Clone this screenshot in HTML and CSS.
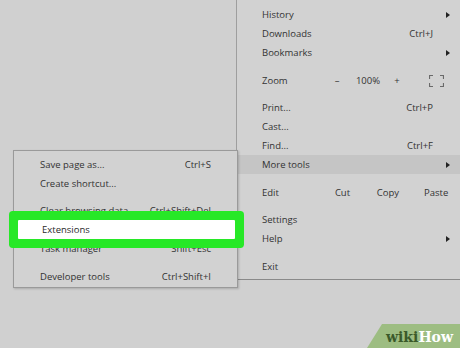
FILE: index.html
```html
<!DOCTYPE html>
<html lang="en">
<head>
    <meta charset="UTF-8">
    <meta name="viewport" content="width=device-width, initial-scale=1.0">
    <title>Chrome menu - More tools</title>
    <link rel="stylesheet" href="styles.css">
</head>
<body>
    <!-- Main browser menu -->
    <div class="menu">
        <div class="row"><span>History</span><span></span><span class="arrow"></span></div>
        <div class="row"><span>Downloads</span><span>Ctrl+J</span><span></span></div>
        <div class="row"><span>Bookmarks</span><span></span><span class="arrow"></span></div>
        <div class="sep-9"></div>
        <div class="row zoom-row">
            <span class="zoom-label">Zoom</span>
            <span class="zoom-minus">&ndash;</span>
            <span class="zoom-value">100%</span>
            <span class="zoom-plus">+</span>
            <span class="zoom-full">
                <svg width="15" height="12" viewBox="0 0 15 12">
                    <path d="M0.5 4V0.5H4M11 0.5H14.5V4M14.5 8V11.5H11M4 11.5H0.5V8" fill="none" stroke="#6a6a6a" stroke-width="1.2"/>
                </svg>
            </span>
        </div>
        <div class="sep-8"></div>
        <div class="row"><span>Print...</span><span>Ctrl+P</span><span></span></div>
        <div class="row"><span>Cast...</span><span></span><span></span></div>
        <div class="row"><span>Find...</span><span>Ctrl+F</span><span></span></div>
        <div class="row hover"><span>More tools</span><span></span><span class="arrow"></span></div>
        <div class="sep-9"></div>
        <div class="row edit-row">
            <span class="edit-label">Edit</span>
            <span class="edit-cut">Cut</span>
            <span class="edit-copy">Copy</span>
            <span class="edit-paste">Paste</span>
        </div>
        <div class="sep-8"></div>
        <div class="row"><span>Settings</span><span></span><span></span></div>
        <div class="row"><span>Help</span><span></span><span class="arrow"></span></div>
        <div class="sep-9"></div>
        <div class="row"><span>Exit</span><span></span><span></span></div>
    </div>

    <!-- More tools submenu -->
    <div class="submenu">
        <div class="sub-row"><span>Save page as...</span><span>Ctrl+S</span></div>
        <div class="sub-row"><span>Create shortcut...</span><span></span></div>
        <div class="sep-8"></div>
        <div class="sub-row"><span>Clear browsing data...</span><span>Ctrl+Shift+Del</span></div>
        <div class="sub-row picked"><span>Extensions</span><span></span></div>
        <div class="sub-row"><span>Task manager</span><span>Shift+Esc</span></div>
        <div class="sep-9"></div>
        <div class="sub-row"><span>Developer tools</span><span>Ctrl+Shift+I</span></div>
    </div>

    <div class="wikihow"><span class="wiki">wiki</span><span class="how">How</span></div>
</body>
</html>
```

FILE: styles.css
```css
* {
    margin: 0;
    padding: 0;
    box-sizing: border-box;
}
body {
    width: 460px;
    height: 348px;
    overflow: hidden;
    position: relative;
    background: #d0d0d0;
    font-family: 'Open Sans', 'Noto Sans', sans-serif;
    font-size: 9.5px;
    color: #333;
}
.menu {
    margin-left: 236px;
    background: #d2d2d2;
    border-left: 1px solid #9e9e9e;
    border-bottom: 1px solid #8a8a8a;
    padding: 5px 0 3px;
}
.row {
    display: grid;
    grid-template-columns: 1fr auto 27px;
    align-items: center;
    height: 19px;
    padding-left: 25px;
    white-space: nowrap;
}
.row.hover {
    background: #c5c5c5;
}
.arrow {
    width: 0;
    height: 0;
    margin-left: 13px;
    border-top: 3px solid transparent;
    border-bottom: 3px solid transparent;
    border-left: 4px solid #222;
}
.sep-8 {
    height: 8px;
}
.sep-9 {
    height: 9px;
}
.zoom-row {
    grid-template-columns: 65px 20px 42px 16px 1fr;
}
.zoom-minus, .zoom-value, .zoom-plus {
    text-align: center;
}
.zoom-full {
    display: flex;
    padding-left: 24px;
}
.edit-row {
    grid-template-columns: 58px 45px 46px 1fr;
}
.edit-cut, .edit-copy {
    text-align: center;
}
.edit-paste {
    padding-left: 13px;
}
.submenu {
    position: absolute;
    left: 13px;
    top: 150px;
    width: 225px;
    background: #d2d2d2;
    border: 1px solid #9a9a9a;
    box-shadow: 1px 1px 2px rgba(0, 0, 0, 0.18);
    padding: 4px 0 1px;
}
.sub-row {
    display: grid;
    grid-template-columns: 1fr auto;
    align-items: center;
    height: 19px;
    padding: 0 26px;
    white-space: nowrap;
}
.sub-row.picked {
    position: relative;
    z-index: 1;
    margin: 0 2px 0 4px;
    padding-left: 24px;
    background: #fff;
    border-radius: 1px;
    color: #2a2a2a;
    box-shadow: 0 0 0 9px #27e827;
}
.wikihow {
    position: absolute;
    right: 0;
    bottom: 0;
    width: 93px;
    height: 24px;
    padding-left: 19px;
    background: #9dbd82;
    clip-path: polygon(15px 0, 100% 0, 100% 100%, 0 100%);
    font-family: 'DejaVu Serif', 'Liberation Serif', serif;
    font-weight: bold;
    font-size: 14px;
    line-height: 26px;
}
.wiki {
    color: #3b5a2a;
}
.how {
    color: #fff;
}
```
